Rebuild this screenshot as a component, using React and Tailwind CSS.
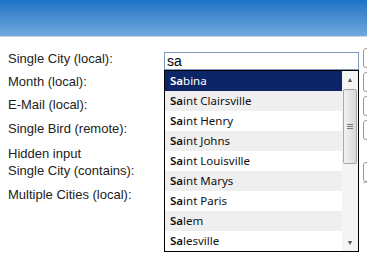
import React from 'react';

const labels = [
  { text: "Single City (local):", h: "h-[23px]" },
  { text: "Month (local):", h: "h-[23px]" },
  { text: "E-Mail (local):", h: "h-[24px]" },
  { text: "Single Bird (remote):", h: "h-[25px]" },
  { text: "Hidden input", h: "h-[17px]" },
  { text: "Single City (contains):", h: "h-[24px]" },
  { text: "Multiple Cities (local):", h: "h-[22px]" },
];

const ciudades = [
  "Sabina", "Saint Clairsville", "Saint Henry", "Saint Johns", "Saint Louisville",
  "Saint Marys", "Saint Paris", "Salem", "Salesville",
];

export default function App() {
  return (
    <div className="w-[367px] h-[256px] bg-white overflow-hidden relative font-['Liberation_Sans',Arial,sans-serif]">
      <div className="h-[37px] bg-gradient-to-b from-[#1b72c4] to-[#6ea9dc] border-b border-[#c9d6e2]" />
      <div className="flex pt-[13px]">
        <div className="pl-[8px] w-[164px] shrink-0 text-[13px] text-[#222]">
          {labels.map((l) => (
            <div key={l.text} className={`${l.h} leading-[17px]`}>{l.text}</div>
          ))}
        </div>
        <div className="w-[195px] shrink-0 flex flex-col mt-[2px]">
          <div className="h-[18px] border border-[#7a9cc0] text-[14px] leading-[16px] pl-[2px] text-black">sa</div>
          <div className="border border-black bg-white flex font-['Noto_Sans','Open_Sans',sans-serif] text-[11.5px]">
            <div className="flex-1">
              {ciudades.map((c, i) => (
                <div
                  key={c}
                  className={`h-[20px] leading-[20px] pl-[5px] ${i === 0 ? "bg-[#0b2566] text-white" : i % 2 === 1 ? "bg-[#efefef] text-[#111]" : "text-[#111]"}`}
                >
                  <span className="font-semibold">Sa</span>{c.slice(2)}
                </div>
              ))}
            </div>
            <div className="w-[16px] bg-[#f4f4f4] flex flex-col items-center">
              <div className="h-[18px] flex items-center justify-center text-[7px] text-[#555]">▲</div>
              <div className="w-[14px] h-[75px] border border-[#a8a8a8] rounded-[2px] bg-gradient-to-r from-[#f2f2f2] to-[#d8d8d8] flex flex-col items-center justify-center gap-[1px]">
                <div className="w-[6px] h-px bg-[#777]" />
                <div className="w-[6px] h-px bg-[#777]" />
                <div className="w-[6px] h-px bg-[#777]" />
              </div>
              <div className="flex-1" />
              <div className="h-[16px] flex items-center justify-center text-[7px] text-[#555]">▼</div>
            </div>
          </div>
        </div>
        <div className="pl-[4px] shrink-0 flex flex-col -mt-[2px]">
          <div className="w-[12px] h-[20px] border border-[#999] rounded-[3px] mb-[4px]" />
          <div className="w-[12px] h-[20px] border border-[#999] rounded-[3px] mb-[4px]" />
          <div className="w-[12px] h-[20px] border border-[#999] rounded-[3px] mb-[4px]" />
          <div className="w-[12px] h-[20px] border border-[#999] rounded-[3px] mb-[22px]" />
          <div className="w-[12px] h-[20px] border border-[#999] rounded-[3px]" />
          <div className="w-[12px] h-px bg-[#bbb]" />
        </div>
      </div>
    </div>
  );
}
